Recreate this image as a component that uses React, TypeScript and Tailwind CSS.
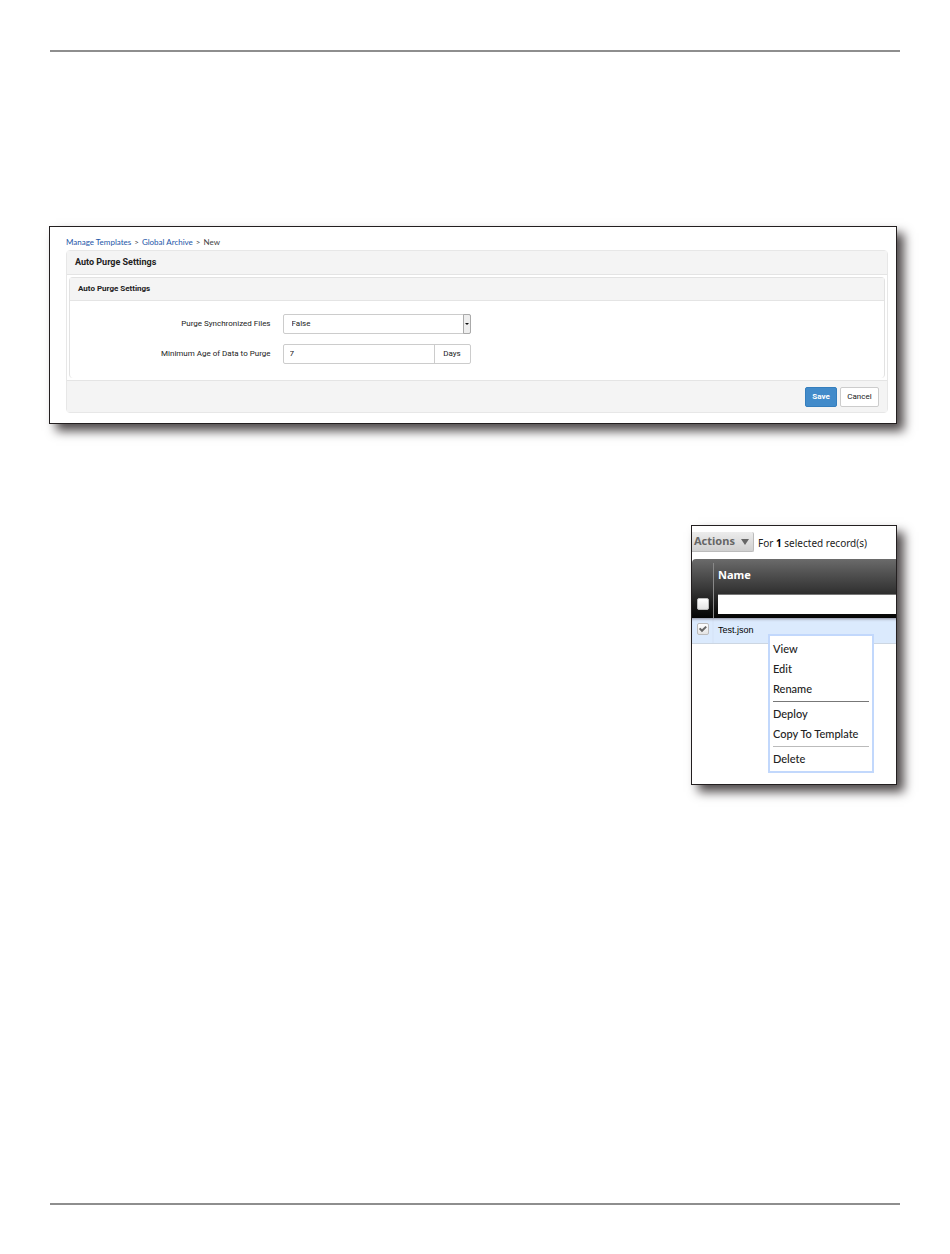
import { useState } from "react";

const CRUMBS = ["Manage Templates", "Global Archive"];

/** Context menu entries, split into groups by a rule. */
const MENU_GROUPS = [["View", "Edit", "Rename"], ["Deploy", "Copy To Template"], ["Delete"]];

function PurgeSettings() {
  const [purge, setPurge] = useState("False");
  const [age, setAge] = useState("7");

  return (
    <section className="border border-[#231f20] bg-white pt-[7px] pr-2 pb-2.5 pl-4 font-[Roboto,'Liberation_Sans',sans-serif] text-[8px] text-[#222] shadow-[7px_7px_10px_#4f4a4b]">
      <nav className="flex h-4 items-center gap-[3px] font-[Lato,'Noto_Sans',sans-serif] leading-3 text-[#444]">
        {CRUMBS.map((crumb) => (
          <span key={crumb} className="flex gap-[3px]">
            <a href="#" className="text-[#1d56a8]">
              {crumb}
            </a>
            <span>&gt;</span>
          </span>
        ))}
        <span>New</span>
      </nav>

      <form className="rounded-sm border border-[#e7e7e7]" onSubmit={(e) => e.preventDefault()}>
        <h2 className="flex h-6 items-center border-b border-[#e4e4e4] bg-[#f4f4f4] px-2 text-[9px] font-bold">
          Auto Purge Settings
        </h2>
        <div className="p-0.5">
          <div className="rounded-sm border border-b-0 border-[#e2e2e2] pb-3.5">
            <h3 className="flex h-[23px] items-center border-b border-[#e4e4e4] bg-[#f4f4f4] px-2 text-[8px] font-bold">
              Auto Purge Settings
            </h3>
            <div className="grid grid-cols-[1fr_3fr] items-center gap-x-3 gap-y-2.5 pt-[13px]">
              <label htmlFor="purge" className="text-right">
                Purge Synchronized Files
              </label>
              <div className="relative w-47">
                <select
                  id="purge"
                  value={purge}
                  onChange={(e) => setPurge(e.target.value)}
                  className="block h-5 w-full appearance-none rounded-xs border border-[#ccc] bg-white px-2"
                >
                  <option>False</option>
                  <option>True</option>
                </select>
                <span className="pointer-events-none absolute inset-y-0 right-0 flex w-2 items-center justify-center rounded-r-xs border border-[#aaa] bg-[#eee]">
                  <svg viewBox="0 0 4 2" className="h-0.5 w-1" fill="#111">
                    <path d="M0 0h4L2 2z" />
                  </svg>
                </span>
              </div>
              <label htmlFor="age" className="text-right">
                Minimum Age of Data to Purge
              </label>
              <div className="flex h-5 w-47 rounded-xs border border-[#ccc]">
                <input
                  id="age"
                  value={age}
                  onChange={(e) => setAge(e.target.value)}
                  className="min-w-0 flex-1 px-1.5"
                />
                <span className="flex w-9 items-center justify-center border-l border-[#ccc]">Days</span>
              </div>
            </div>
          </div>
        </div>
        <footer className="flex h-8 items-center justify-end gap-[3px] border-t border-[#e4e4e4] bg-[#f4f4f4] px-2">
          <button type="submit" className="h-5 w-8 rounded-xs border border-[#357ebd] bg-[#428bca] font-bold text-white">
            Save
          </button>
          <button type="button" className="h-5 w-[39px] rounded-xs border border-[#ccc] bg-white">
            Cancel
          </button>
        </footer>
      </form>
    </section>
  );
}

function CheckBox({ label, checked, onChange }: { label: string; checked: boolean; onChange: () => void }) {
  return (
    <span className="relative mx-auto block size-3">
      <input
        type="checkbox"
        aria-label={label}
        checked={checked}
        onChange={onChange}
        className="block size-3 appearance-none rounded-xs border border-[#bbb] bg-linear-to-b from-white to-[#e4e4e4]"
      />
      {checked && (
        <svg viewBox="0 0 12 12" className="pointer-events-none absolute inset-0 size-3" fill="none" stroke="#666" strokeWidth="2">
          <path d="M2.6 5.4 5 7.8l4.2-4.2" />
        </svg>
      )}
    </span>
  );
}

function RecordList() {
  const [all, setAll] = useState(false);
  const [selected, setSelected] = useState(true);
  const [filter, setFilter] = useState("");

  return (
    <section className="relative h-65 w-[206px] border border-[#231f20] bg-white font-['Noto_Sans',sans-serif] text-[10px] text-[#222] shadow-[7px_7px_10px_#4f4a4b]">
      <div className="overflow-hidden">
        <div className="flex items-center gap-1 pt-1.5 pb-[7px]">
          <button
            type="button"
            className="flex h-5 w-[62px] items-center gap-1.5 rounded-r-xs border-r border-b border-[#bbb] bg-linear-to-b from-[#ececec] to-[#d0d0d0] pl-0.5 text-[11px] font-bold text-[#666]"
          >
            Actions
            <svg viewBox="0 0 8 6" className="h-1.5 w-2 shrink-0" fill="#666">
              <path d="M0 0h8L4 6z" />
            </svg>
          </button>
          <p className="pt-0.5 whitespace-nowrap">
            For <b className="text-black">1</b> selected record(s)
          </p>
        </div>

        <div className="overflow-hidden rounded-tl-sm">
          <table className="w-full table-fixed border-collapse text-left">
            <colgroup>
              <col className="w-[21px]" />
              <col />
            </colgroup>
            <thead className="bg-linear-to-b from-[#6b6b6b] via-[#383838] to-[#050505]">
              <tr>
                <th rowSpan={2} className="h-[59px] p-0 pb-2 align-bottom">
                  <CheckBox label="Select all" checked={all} onChange={() => setAll(!all)} />
                </th>
                <th className="h-[35px] p-0 pt-1 align-top text-[11px] text-white">
                  <div className="h-[31px] border-l border-[#888] pt-1 pl-1 leading-4">Name</div>
                </th>
              </tr>
              <tr>
                <th className="h-6 p-0 align-top">
                  <div className="h-6 border-l border-[#888] pl-1">
                    <input
                      aria-label="Filter by name"
                      value={filter}
                      onChange={(e) => setFilter(e.target.value)}
                      className="block h-5 w-full border-t border-[#777] bg-white px-1 font-normal text-[#333]"
                    />
                  </div>
                </th>
              </tr>
            </thead>
            <tbody>
              <tr className="border-b border-[#ccd6e2] bg-[#dbeafd]">
                <td className="h-[25px] p-0 pb-0.5 shadow-[inset_0_3px_3px_-2px_#889]">
                  <CheckBox label="Test.json" checked={selected} onChange={() => setSelected(!selected)} />
                </td>
                <td className="h-[25px] p-0 pl-[5px] font-['Liberation_Sans',Arial,sans-serif] text-[9px] text-black shadow-[inset_0_3px_3px_-2px_#889]">
                  Test.json
                </td>
              </tr>
            </tbody>
          </table>
        </div>
      </div>

      {/* Context menu, opened over the selected row */}
      <div className="absolute top-27 left-[76px] w-[106px] border-2 border-[#c2d8fc] bg-white px-[3px] pt-[3px] pb-0.5 font-[Lato,'Noto_Sans',sans-serif] text-[11px] font-medium">
        {MENU_GROUPS.map((group) => (
          <ul
            key={group[0]}
            className="mt-0.5 border-t border-[#777] pt-0.5 first:mt-0 first:border-t-0 first:pt-0 last:border-[#bbb]"
          >
            {group.map((item) => (
              <li key={item}>
                <button type="button" className="block h-5 w-full text-left whitespace-nowrap">
                  {item}
                </button>
              </li>
            ))}
          </ul>
        ))}
      </div>
    </section>
  );
}

export default function App() {
  return (
    <main className="flex min-h-screen flex-col bg-white pt-[50px] pb-[49px]">
      <hr className="mx-[50px] border-t-2 border-[#8e8e8e]" />
      <div className="mt-[174px] mr-[53px] ml-[49px] flex flex-1 flex-col gap-[101px]">
        <PurgeSettings />
        <div className="flex justify-end">
          <RecordList />
        </div>
      </div>
      <hr className="mx-[50px] border-t-2 border-[#8e8e8e]" />
    </main>
  );
}
